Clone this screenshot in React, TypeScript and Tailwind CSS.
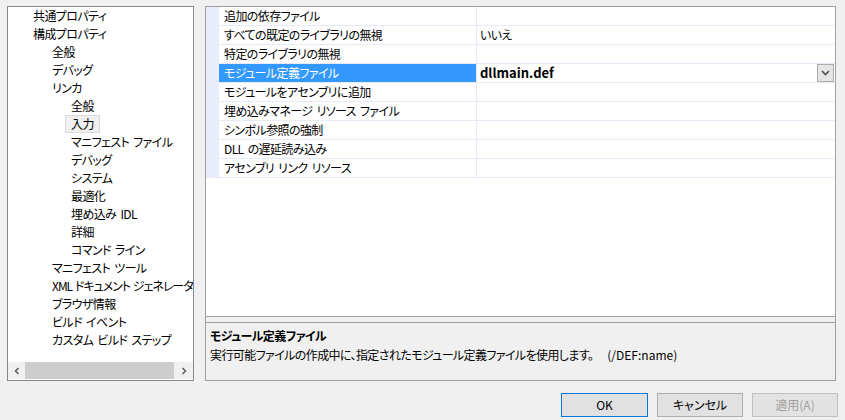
import * as React from "react";

type TreeItem = { label: string; level: number; selected?: boolean; tight?: boolean };

const TREE: TreeItem[] = [
  { label: "共通プロパティ", level: 0 },
  { label: "構成プロパティ", level: 0 },
  { label: "全般", level: 1 },
  { label: "デバッグ", level: 1 },
  { label: "リンカ", level: 1 },
  { label: "全般", level: 2 },
  { label: "入力", level: 2, selected: true },
  { label: "マニフェスト ファイル", level: 2 },
  { label: "デバッグ", level: 2 },
  { label: "システム", level: 2 },
  { label: "最適化", level: 2 },
  { label: "埋め込み IDL", level: 2 },
  { label: "詳細", level: 2 },
  { label: "コマンド ライン", level: 2 },
  { label: "マニフェスト ツール", level: 1 },
  { label: "XML ドキュメント ジェネレータ", level: 1, tight: true },
  { label: "ブラウザ情報", level: 1 },
  { label: "ビルド イベント", level: 1 },
  { label: "カスタム ビルド ステップ", level: 1 },
];

type Prop = { name: string; value?: string; selected?: boolean };

const PROPS: Prop[] = [
  { name: "追加の依存ファイル" },
  { name: "すべての既定のライブラリの無視", value: "いいえ" },
  { name: "特定のライブラリの無視" },
  { name: "モジュール定義ファイル", value: "dllmain.def", selected: true },
  { name: "モジュールをアセンブリに追加" },
  { name: "埋め込みマネージ リソース ファイル" },
  { name: "シンボル参照の強制" },
  { name: "DLL の遅延読み込み" },
  { name: "アセンブリ リンク リソース" },
];

const INDENT = ["pl-[19px]", "pl-[38px]", "pl-[57px]"];

function Tree() {
  return (
    <div className="w-[187px] h-[375px] border border-[#828790] bg-white flex flex-col">
      <div className="flex-1 overflow-hidden whitespace-nowrap">
        {TREE.map((t, i) => (
          <div key={i} className={"h-[18px] flex items-center " + INDENT[t.level]}>
            <span
              className={
                "px-[5px] leading-[16px] border " +
                (t.selected ? "border-[#dadada] bg-[#f0f0f0]" : "border-transparent") +
                (t.tight ? " tracking-[-1px] [word-spacing:1px]" : "")
              }
            >
              {t.label}
            </span>
          </div>
        ))}
      </div>
      <div className="h-[17px] bg-[#f0f0f0] flex items-center mb-[1px]">
        <div className="w-[17px] flex justify-center">
          <svg width="8" height="8" viewBox="0 0 8 8">
            <path d="M5.5 1 L2.5 4 L5.5 7" stroke="#606060" strokeWidth="1.6" fill="none" />
          </svg>
        </div>
        <div className="flex-1 h-[17px] bg-[#cdcdcd]" />
        <div className="w-[19px] flex justify-center">
          <svg width="8" height="8" viewBox="0 0 8 8">
            <path d="M2.5 1 L5.5 4 L2.5 7" stroke="#606060" strokeWidth="1.6" fill="none" />
          </svg>
        </div>
      </div>
    </div>
  );
}

function Grid() {
  return (
    <div className="w-[631px] h-[375px] border border-[#a0a0a0] flex flex-col bg-[#f0f0f0]">
      <div className="h-[310px] bg-white border-b border-[#a0a0a0]">
        {PROPS.map((p, i) => (
          <div key={i} className="h-[19px] flex">
            <div className="w-[13px] bg-[#e9ecfa]" />
            <div
              className={
                "w-[257px] pl-[5px] flex items-center border-b border-[#e6e9f6] " +
                (p.selected ? "bg-[#3399ff] text-white" : "")
              }
            >
              {p.name}
            </div>
            <div
              className={
                "flex-1 flex items-center pl-[3px] border-l border-b border-[#e6e9f6] " +
                (p.selected ? "font-bold text-[13px] tracking-normal" : "")
              }
            >
              <span className="flex-1">{p.value}</span>
              {p.selected && (
                <div className="w-[17px] h-[18px] mr-[1px] border border-[#acacac] bg-[#e5e5e5] flex items-center justify-center">
                  <svg width="9" height="6" viewBox="0 0 9 6">
                    <path d="M1 1 L4.5 4.5 L8 1" stroke="#505050" strokeWidth="1.6" fill="none" />
                  </svg>
                </div>
              )}
            </div>
          </div>
        ))}
      </div>
      <div className="mt-[5px] flex-1 border-t border-[#a0a0a0] px-[4px] pt-[3px]">
        <div className="font-bold leading-[19px]">モジュール定義ファイル</div>
        <div className="leading-[19px]">
          実行可能ファイルの作成中に、指定されたモジュール定義ファイルを使用します。
          <span className="ml-[14px] tracking-normal">(/DEF:name)</span>
        </div>
      </div>
    </div>
  );
}

export default function App() {
  return (
    <div
      className="w-[845px] h-[420px] bg-[#f0f0f0] text-[12px] text-black overflow-hidden [font-feature-settings:'palt'] tracking-[-0.6px] [word-spacing:2px]"
      style={{ fontFamily: '"Noto Sans CJK JP", "Noto Sans", sans-serif' }}
    >
      <div className="flex gap-[11px] pl-[7px] pt-[6px]">
        <Tree />
        <Grid />
      </div>
      <div className="flex justify-end gap-[9px] pr-[7px] pt-[12px] tracking-normal">
        <button className="w-[87px] h-[24px] border border-[#0078d7] bg-[#e1e1e1]">OK</button>
        <button className="w-[86px] h-[24px] border border-[#adadad] bg-[#e1e1e1]">キャンセル</button>
        <button className="w-[86px] h-[24px] border border-[#bfbfbf] bg-[#cccccc]/40 text-[#a0a0a0]">
          適用(A)
        </button>
      </div>
    </div>
  );
}
